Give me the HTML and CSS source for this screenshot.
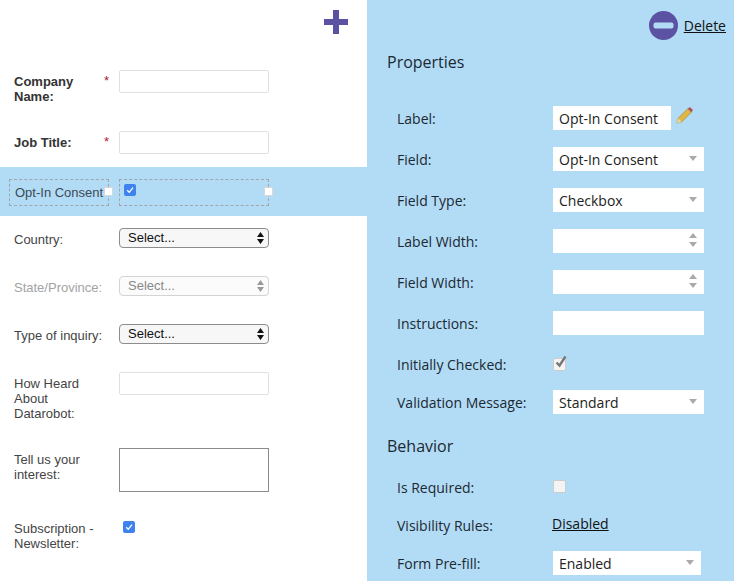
FILE: index.html
```html
<!DOCTYPE html>
<html lang="en">
<head>
<meta charset="utf-8">
<title>Form editor</title>
<link rel="stylesheet" href="styles.css">
</head>
<body>
<div class="app">
  <main class="canvas">
    <div class="toolbar">
      <svg class="plus" width="24" height="24" viewBox="0 0 24 24"><path d="M9 0h6v9h9v6h-9v9H9v-9H0V9h9z" fill="#5b52a3"/></svg>
    </div>
    <div class="row row-company">
      <div class="lbl bold">Company Name:</div><div class="star">*</div>
      <div class="input"></div>
    </div>
    <div class="row row-job">
      <div class="lbl bold one">Job Title:</div><div class="star">*</div>
      <div class="input"></div>
    </div>
    <div class="band">
      <div class="dash dash-label">Opt-In Consent<span class="handle handle-label"></span></div>
      <div class="dash dash-field">
        <span class="check"><svg width="12" height="12" viewBox="0 0 12 12"><path d="M3.2 6.3l2 2 3.8-4.6" fill="none" stroke="#fff" stroke-width="1.3"/></svg></span>
        <span class="handle handle-field"></span>
      </div>
    </div>
    <div class="row row-country">
      <div class="lbl wide">Country:</div>
      <div class="select">Select...<svg class="updown" width="7" height="12" viewBox="0 0 7 12"><path d="M3.5 0L7 5H0zM3.5 12L0 7h7z"/></svg></div>
    </div>
    <div class="row row-state">
      <div class="lbl wide muted">State/Province:</div>
      <div class="select disabled">Select...<svg class="updown" width="7" height="12" viewBox="0 0 7 12"><path d="M3.5 0L7 5H0zM3.5 12L0 7h7z"/></svg></div>
    </div>
    <div class="row row-type">
      <div class="lbl wide">Type of inquiry:</div>
      <div class="select">Select...<svg class="updown" width="7" height="12" viewBox="0 0 7 12"><path d="M3.5 0L7 5H0zM3.5 12L0 7h7z"/></svg></div>
    </div>
    <div class="row row-heard">
      <div class="lbl wide narrowtext">How Heard About Datarobot:</div>
      <div class="input"></div>
    </div>
    <div class="row row-interest">
      <div class="lbl wide narrowtext">Tell us your interest:</div>
      <div class="textarea"></div>
    </div>
    <div class="row row-sub">
      <div class="lbl wide flush">Subscription - Newsletter:</div>
      <span class="check check-sub"><svg width="12" height="12" viewBox="0 0 12 12"><path d="M3.2 6.3l2 2 3.8-4.6" fill="none" stroke="#fff" stroke-width="1.3"/></svg></span>
    </div>
  </main>

  <aside class="props">
    <div class="delete-bar">
      <svg width="29" height="29" viewBox="0 0 29 29"><circle cx="14.5" cy="14.5" r="14.5" fill="#5b52a3"/><rect x="4.5" y="11.5" width="20" height="6" rx="2" fill="#b2dcf5"/></svg>
      <a class="link" href="#">Delete</a>
    </div>
    <h2 class="heading heading-props">Properties</h2>
    <div class="prop-list">
      <div class="prop"><span class="prop-label">Label:</span>
        <div class="field field-label">Opt-In Consent</div>
        <svg class="pencil" width="17" height="17" viewBox="0 0 18 18"><path d="M1 17l1.2-5L12.5 1.8l3.7 3.7L6 15.8z" fill="#e3b83f" stroke="#9a8440" stroke-width=".7"/><path d="M1 17l1.2-5 3.8 3.8z" fill="#e8d9a8"/><path d="M12.5 1.8l1-1a1.5 1.5 0 0 1 2.1 0l1.6 1.6a1.5 1.5 0 0 1 0 2.1l-1 1z" fill="#b5525a"/></svg>
      </div>
      <div class="prop"><span class="prop-label">Field:</span>
        <div class="field">Opt-In Consent<i class="caret"></i></div></div>
      <div class="prop"><span class="prop-label">Field Type:</span>
        <div class="field">Checkbox<i class="caret"></i></div></div>
      <div class="prop"><span class="prop-label">Label Width:</span>
        <div class="field"><i class="spin"></i></div></div>
      <div class="prop"><span class="prop-label">Field Width:</span>
        <div class="field"><i class="spin"></i></div></div>
      <div class="prop"><span class="prop-label">Instructions:</span>
        <div class="field"></div></div>
      <div class="prop prop-check"><span class="prop-label">Initially Checked:</span>
        <span class="box"><svg class="tick" width="16" height="16" viewBox="0 0 16 16"><path d="M3.5 7.5l3 3L12.5 1.5" fill="none" stroke="#777" stroke-width="2.4"/></svg></span></div>
      <div class="prop prop-valid"><span class="prop-label">Validation Message:</span>
        <div class="field">Standard<i class="caret"></i></div></div>
    </div>
    <h2 class="heading heading-behavior">Behavior</h2>
    <div class="prop prop-req"><span class="prop-label">Is Required:</span><span class="box"></span></div>
    <div class="prop prop-vis"><span class="prop-label">Visibility Rules:</span><a class="link link-vis" href="#">Disabled</a></div>
    <div class="prop prop-fill"><span class="prop-label">Form Pre-fill:</span>
      <div class="field field-fill">Enabled<i class="caret"></i></div></div>
  </aside>
</div>
</body>
</html>
```
FILE: styles.css
```css
* { box-sizing: border-box; }
html, body { margin: 0; padding: 0; }
body { width: 734px; height: 581px; overflow: hidden; background: #fff; }
.app { display: flex; height: 581px; }

.canvas { width: 367px; flex: none; font: 13px/15px "Liberation Sans", Arial, sans-serif; color: #444; }
.toolbar { height: 70px; padding: 10px 0 0 324px; }
.plus { display: block; }

.row { display: flex; align-items: flex-start; padding-left: 14px; }
.lbl { width: 72px; flex: none; padding-top: 4px; }
.lbl.one { padding-top: 4px; }
.lbl.bold { font-weight: bold; color: #333; }
.lbl.wide { width: 105px; padding-top: 4px; }
.lbl.wide.flush { padding-top: 0; }
.lbl.narrowtext { padding-right: 25px; }
.lbl.muted { color: #a3a3a3; }
.star { width: 33px; flex: none; color: #b0202a; font-size: 13px; line-height: 15px; padding: 3px 0 0 18px; }

.input { width: 150px; height: 23px; background: #fff; border: 1px solid #e0e0e0; border-radius: 2px; }
.textarea { width: 150px; height: 44px; background: #fff; border: 1px solid #8b8b8b; }

.row-job { margin-top: 27px; }
.band { position: relative; display: flex; align-items: flex-start; height: 49px; margin-top: 13px; padding: 12px 0 0 9px; background: #b2dcf5; }
.dash { position: relative; height: 27px; border: 1px dashed #a3a6a8; }
.dash-label { width: 100px; padding: 5px 0 0 5px; line-height: 15px; color: #3d4a55; white-space: nowrap; }
.dash-field { width: 150px; margin-left: 10px; padding: 4px 0 0 4px; }
.handle { position: absolute; width: 9px; height: 9px; top: 7px; background: #fff; border: 1px solid #d8d8d8; }
.handle-label { right: -5px; }
.handle-field { right: -5px; }
.check { display: block; width: 12px; height: 12px; border-radius: 2px; background: #3f82ed; }
.check svg { display: block; }

.row-country { margin-top: 12px; }
.row-state { margin-top: 28px; }
.row-type { margin-top: 28px; }
.row-heard { margin-top: 28px; }
.row-interest { margin-top: 27px; }
.row-sub { margin-top: 29px; }

.select { position: relative; width: 150px; height: 20px; padding: 1px 0 0 8px; border: 1px solid #8c8c8c; border-radius: 4px; background: #f7f7f7; color: #111; font-size: 13px; line-height: 16px; }
.select.disabled { border-color: #d4d4d4; color: #888; background: #fbfbfb; }
.updown { position: absolute; right: 4px; top: 3px; fill: #111; }
.disabled .updown { fill: #999; }
.check-sub { margin: 0 0 0 4px; }

.props { flex: 1; background: #b2dcf5; padding-left: 20px; font: 14px/19px "Open Sans", sans-serif; color: #1c2833; }
.delete-bar { display: flex; align-items: center; justify-content: flex-end; gap: 6px; height: 29px; margin-top: 11px; padding-right: 8px; }
.link { color: #111; text-decoration: underline; }
.heading { margin: 0; font-weight: 400; font-size: 16px; line-height: 22px; }
.heading-props { margin-top: 11px; }
.heading-behavior { margin-top: 21px; }
.prop-list { margin-top: 33px; }
.prop { display: flex; align-items: center; padding-left: 10px; height: 24px; margin-bottom: 17px; }
.prop-label { width: 156px; flex: none; }
.field { position: relative; width: 151px; height: 24px; padding: 3px 0 0 6px; background: #fff; color: #222; }
.field-label { width: 118px; }
.field-fill { width: 148px; }
.pencil { margin: -6px 0 0 5px; }
.caret { position: absolute; right: 7px; top: 9px; width: 0; height: 0; border: 4px solid transparent; border-top: 5px solid #aaa; border-bottom: 0; }
.spin { position: absolute; right: 7px; top: 4px; width: 0; height: 0; border: 4px solid transparent; border-bottom: 5px solid #aaa; border-top: 0; }
.spin::after { content: ""; position: absolute; left: -4px; top: 9px; border: 4px solid transparent; border-top: 5px solid #aaa; border-bottom: 0; }
.box { position: relative; display: block; width: 13px; height: 13px; margin-top: -2px; background: #f4f4f4; border: 1px solid #ccc; border-radius: 2px; }
.tick { position: absolute; left: -1px; top: -4px; }
.prop-check { height: 27px; margin-bottom: 11px; }
.prop-check .prop-label { padding-bottom: 2px; }
.prop-valid { margin-bottom: 0; }
.prop-req { height: 19px; margin-top: 21px; margin-bottom: 19px; }
.prop-vis { height: 19px; margin-bottom: 0; }
.link-vis { margin: -4px 0 0 -1px; }
.prop-fill { margin-top: 16px; margin-bottom: 0; }
```
